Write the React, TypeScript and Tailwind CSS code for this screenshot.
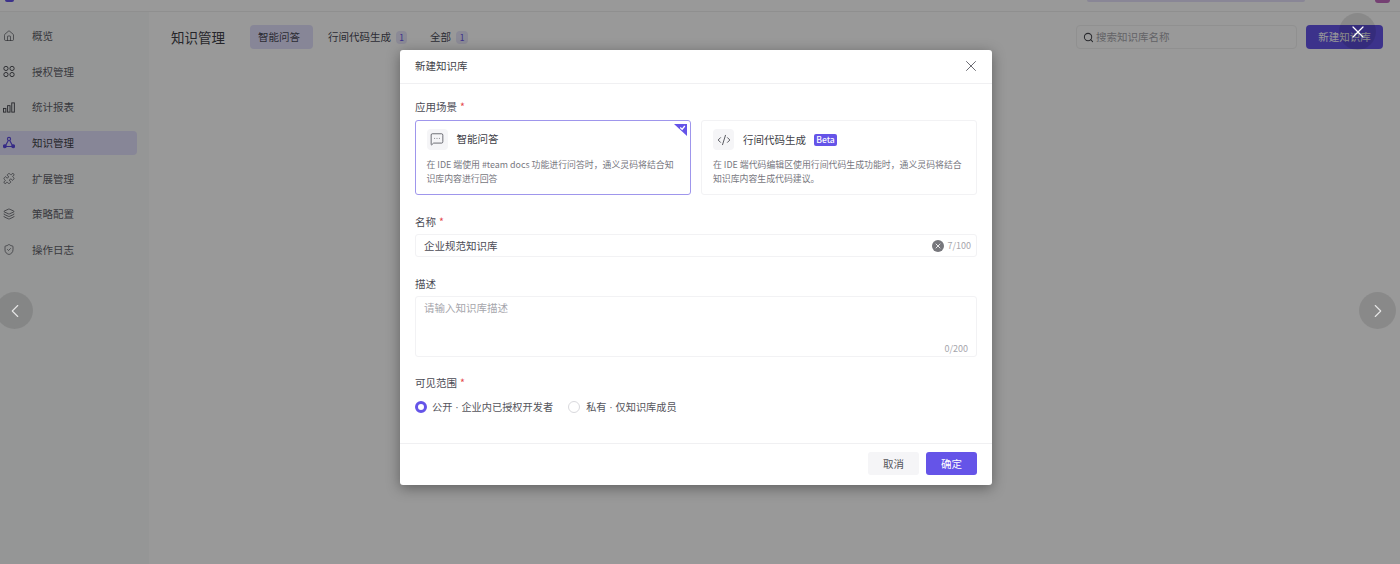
import { ChevronLeft, ChevronRight, CodeXml, House, Layers, MessageSquareMore, Puzzle, Search, ShieldCheck, X } from "lucide-react";
import type { ReactNode } from "react";

const Grid = () => (
  <svg width="13" height="13" viewBox="0 0 13 13" fill="none" stroke="currentColor" strokeWidth="1">
    <circle cx="3.2" cy="3.2" r="2.3" />
    <circle cx="9.8" cy="3.2" r="2.3" />
    <circle cx="3.2" cy="9.8" r="2.3" />
    <circle cx="9.8" cy="9.8" r="2.3" />
  </svg>
);

const Bars = () => (
  <svg width="13" height="13" viewBox="0 0 13 13" fill="none" stroke="currentColor" strokeWidth="1">
    <rect x="0.5" y="7.5" width="2.6" height="4" />
    <rect x="5" y="4.5" width="2.6" height="7" />
    <rect x="9.5" y="1.5" width="2.8" height="10" />
  </svg>
);

const Knowledge = () => (
  <svg width="13" height="13" viewBox="0 0 13 13" fill="none" stroke="currentColor" strokeWidth="1.2">
    <path d="M6.5 3 L2.2 10.8 H10.8 Z" />
    <circle cx="6.5" cy="2.6" r="1.7" fill="#e2dffc" />
    <circle cx="2" cy="10.6" r="1.5" fill="currentColor" />
    <circle cx="11" cy="10.6" r="1.5" fill="currentColor" />
  </svg>
);

const menu: { label: string; icon: ReactNode; active?: boolean }[] = [
  { label: "概览", icon: <House size={14} strokeWidth={1.3} /> },
  { label: "授权管理", icon: <Grid /> },
  { label: "统计报表", icon: <Bars /> },
  { label: "知识管理", icon: <Knowledge />, active: true },
  { label: "扩展管理", icon: <Puzzle size={15} strokeWidth={1.3} /> },
  { label: "策略配置", icon: <Layers size={14} strokeWidth={1.4} /> },
  { label: "操作日志", icon: <ShieldCheck size={15} strokeWidth={1.3} /> },
];

const Label = ({ text, required }: { text: string; required?: boolean }) => (
  <div className="text-[10.5px] leading-[14px] text-[#4b4b55]">
    {text}
    {required && <span className="ml-[3px] text-[#e5484d]">*</span>}
  </div>
);

const Dot = () => <span className="font-['Liberation_Sans']"> · </span>;

const App = () => {
  return (
    <div className="relative h-[564px] w-[1400px] overflow-hidden bg-white font-['Noto_Sans_CJK_SC','Liberation_Sans',sans-serif]">
      <header className="flex h-[12px] items-start justify-between border-b border-[#efefef] bg-white pl-[5px] pr-[10px]">
        <div className="h-[2px] w-[9px] rounded-b-sm bg-[#6554e8]" />
        <div className="flex items-start gap-[70px]">
          <div className="h-[2px] w-[218px] rounded-b-sm bg-[#e4dffb]" />
          <div className="h-[3px] w-[15px] rounded-b-full bg-[#c46bc0]" />
        </div>
      </header>

      <div className="flex h-[552px]">
        <aside className="flex w-[149px] shrink-0 flex-col gap-[11.6px] bg-[#f8fafb] pt-3">
          {menu.map((item) => (
            <div
              key={item.label}
              className={`flex h-6 w-[137px] items-center gap-[17px] rounded-r pl-[3px] text-[10.5px] ${
                item.active ? "bg-[#e2dffc] text-[#3f3f48]" : "text-[#5f5f68]"
              }`}
            >
              <span className={`flex w-3 justify-center ${item.active ? "text-[#5a48e0]" : "text-[#44454c]"}`}>{item.icon}</span>
              {item.label}
            </div>
          ))}
        </aside>

        <main className="flex-1 pl-[22px] pr-[17px] pt-[13px]">
          <div className="flex h-6 items-center">
            <h1 className="w-[79px] text-[13.5px] font-normal text-[#3f3f48]">知识管理</h1>
            <div className="flex h-6 w-[63px] items-center rounded bg-[#e2dffc] pl-2 text-[10.5px] text-[#4a4a58]">智能问答</div>
            <div className="ml-[15px] text-[10.5px] text-[#4a4a58]">行间代码生成</div>
            <span className="ml-[5px] flex h-[13px] w-[11px] items-center justify-center rounded bg-[#e8e6fb] text-[8.5px] text-[#6554e8]">1</span>
            <div className="ml-[23px] text-[10.5px] text-[#4a4a58]">全部</div>
            <span className="ml-[5px] flex h-[13px] w-[12px] items-center justify-center rounded bg-[#e8e6fb] text-[8.5px] text-[#6554e8]">1</span>
            <div className="ml-auto flex h-6 w-[221px] items-center gap-[2px] rounded border border-[#f0f0f0] pl-[6px] text-[10.5px] text-[#a6a6ac]">
              <Search size={11} strokeWidth={2.2} className="text-[#44454c]" />
              搜索知识库名称
            </div>
            <button className="ml-[9px] h-6 w-[77px] rounded bg-[#6554e8] text-[10.5px] text-white">新建知识库</button>
          </div>
        </main>
      </div>

      {/* mask with the dialog on top */}
      <div className="absolute inset-0 bg-black/40 pl-[400px] pt-[50px]">
        <div className="flex h-[435px] w-[592px] flex-col rounded-[3px] bg-white shadow-[0_3px_14px_rgba(0,0,0,0.38)]">
          <div className="flex h-[34px] shrink-0 items-center justify-between border-b border-[#f0f0f2] pb-[2px] pl-[15px] pr-3">
            <span className="text-[10.5px] text-[#3f3f48]">新建知识库</span>
            <X size={18} strokeWidth={1.1} className="text-[#4b4b55]" />
          </div>

          <div className="flex flex-1 flex-col px-[15px] pt-4">
            <Label text="应用场景" required />
            <div className="mt-[6px] grid h-[75px] grid-cols-2 gap-[10px]">
              <div className="relative overflow-hidden rounded-[3px] border-[1.5px] border-[#9f96ec] px-[10.5px] pt-[7.5px]">
                <div className="flex items-center gap-[9px]">
                  <span className="flex h-[21px] w-[21px] items-center justify-center rounded bg-[#f5f5f7] text-[#44454c]">
                    <MessageSquareMore size={14} strokeWidth={1.3} />
                  </span>
                  <span className="text-[10.5px] text-[#3f3f48]">智能问答</span>
                </div>
                <p className="mt-[8px] text-[8.9px] leading-[14px] text-[#777780]">
                  在 IDE 端使用 #team docs 功能进行问答时，通义灵码将结合知识库内容进行回答
                </p>
                <svg width="13" height="12" viewBox="0 0 13 12" className="absolute right-[3px] top-[3px]">
                  <path d="M0 0 H13 V12 Z" fill="#6554e8" />
                  <path d="M6.2 3.4 L8.2 5.2 L10.8 2" fill="none" stroke="#fff" strokeWidth="1.3" />
                </svg>
              </div>
              <div className="rounded-[3px] border border-[#f2f2f4] px-[11px] pt-[8px]">
                <div className="flex items-center">
                  <span className="mr-[9px] flex h-[21px] w-[21px] items-center justify-center rounded bg-[#f5f5f7] text-[#44454c]">
                    <CodeXml size={14} strokeWidth={1.5} />
                  </span>
                  <span className="text-[10.5px] text-[#3f3f48]">行间代码生成</span>
                  <span className="ml-2 flex h-[12px] w-[23px] items-center justify-center rounded-[2px] bg-[#6554e8] text-[8.5px] font-medium text-white">Beta</span>
                </div>
                <p className="mt-[8px] text-[8.9px] leading-[14px] text-[#777780]">
                  在 IDE 端代码编辑区使用行间代码生成功能时，通义灵码将结合知识库内容生成代码建议。
                </p>
              </div>
            </div>

            <div className="mt-[20px]">
              <Label text="名称" required />
            </div>
            <div className="mt-[5px] flex h-[23px] items-center rounded-[3px] border border-[#f2f2f4] pl-2 pr-[5px] text-[10.5px] text-[#4b4b55]">
              企业规范知识库
              <span className="ml-auto flex h-3 w-3 items-center justify-center rounded-full bg-[#77777c] text-white">
                <X size={8} strokeWidth={2.5} />
              </span>
              <span className="ml-[3px] text-[9px] text-[#a6a6ac]">7/100</span>
            </div>

            <div className="mt-[20px]">
              <Label text="描述" />
            </div>
            <div className="mt-[5px] flex h-[61px] flex-col rounded-[3px] border border-[#f2f2f4] pl-2 pr-2 pt-[3px] text-[10.5px] text-[#a6a6ac]">
              请输入知识库描述
              <span className="mt-auto self-end pb-[1px] text-[9px] leading-[12px]">0/200</span>
            </div>

            <div className="mt-[19px]">
              <Label text="可见范围" required />
            </div>
            <div className="mt-[9px] flex items-center text-[10.2px] text-[#55555c]">
              <span className="h-3 w-3 rounded-full border-[3.5px] border-[#6554e8] bg-white" />
              <span className="ml-[5px]">公开<Dot />企业内已授权开发者</span>
              <span className="ml-[15px] h-3 w-3 rounded-full border border-[#d9d9dd]" />
              <span className="ml-[6px]">私有<Dot />仅知识库成员</span>
            </div>
          </div>

          <div className="flex h-[42px] shrink-0 items-start justify-end gap-[7px] border-t border-[#f0f0f2] pr-[15px] pt-2">
            <button className="h-[23px] w-[51px] rounded-[3px] bg-[#f5f5f7] text-[10.5px] text-[#55555c]">取消</button>
            <button className="h-[23px] w-[51px] rounded-[3px] bg-[#6554e8] text-[10.5px] text-white">确定</button>
          </div>
        </div>
      </div>

      {/* lightbox controls */}
      <div className="absolute left-[-4px] top-[292px] flex h-[37px] w-[37px] items-center justify-center rounded-full bg-black/10 text-[#e6e6e6]">
        <ChevronLeft size={22} strokeWidth={1.2} />
      </div>
      <div className="absolute left-[1359px] top-[292px] flex h-[37px] w-[37px] items-center justify-center rounded-full bg-black/10 text-[#e6e6e6]">
        <ChevronRight size={22} strokeWidth={1.2} />
      </div>
      <div className="absolute left-[1339px] top-[13px] flex h-[37px] w-[37px] items-center justify-center rounded-full bg-black/10 text-white">
        <X size={20} strokeWidth={1.5} />
      </div>
    </div>
  );
};

export default App;
